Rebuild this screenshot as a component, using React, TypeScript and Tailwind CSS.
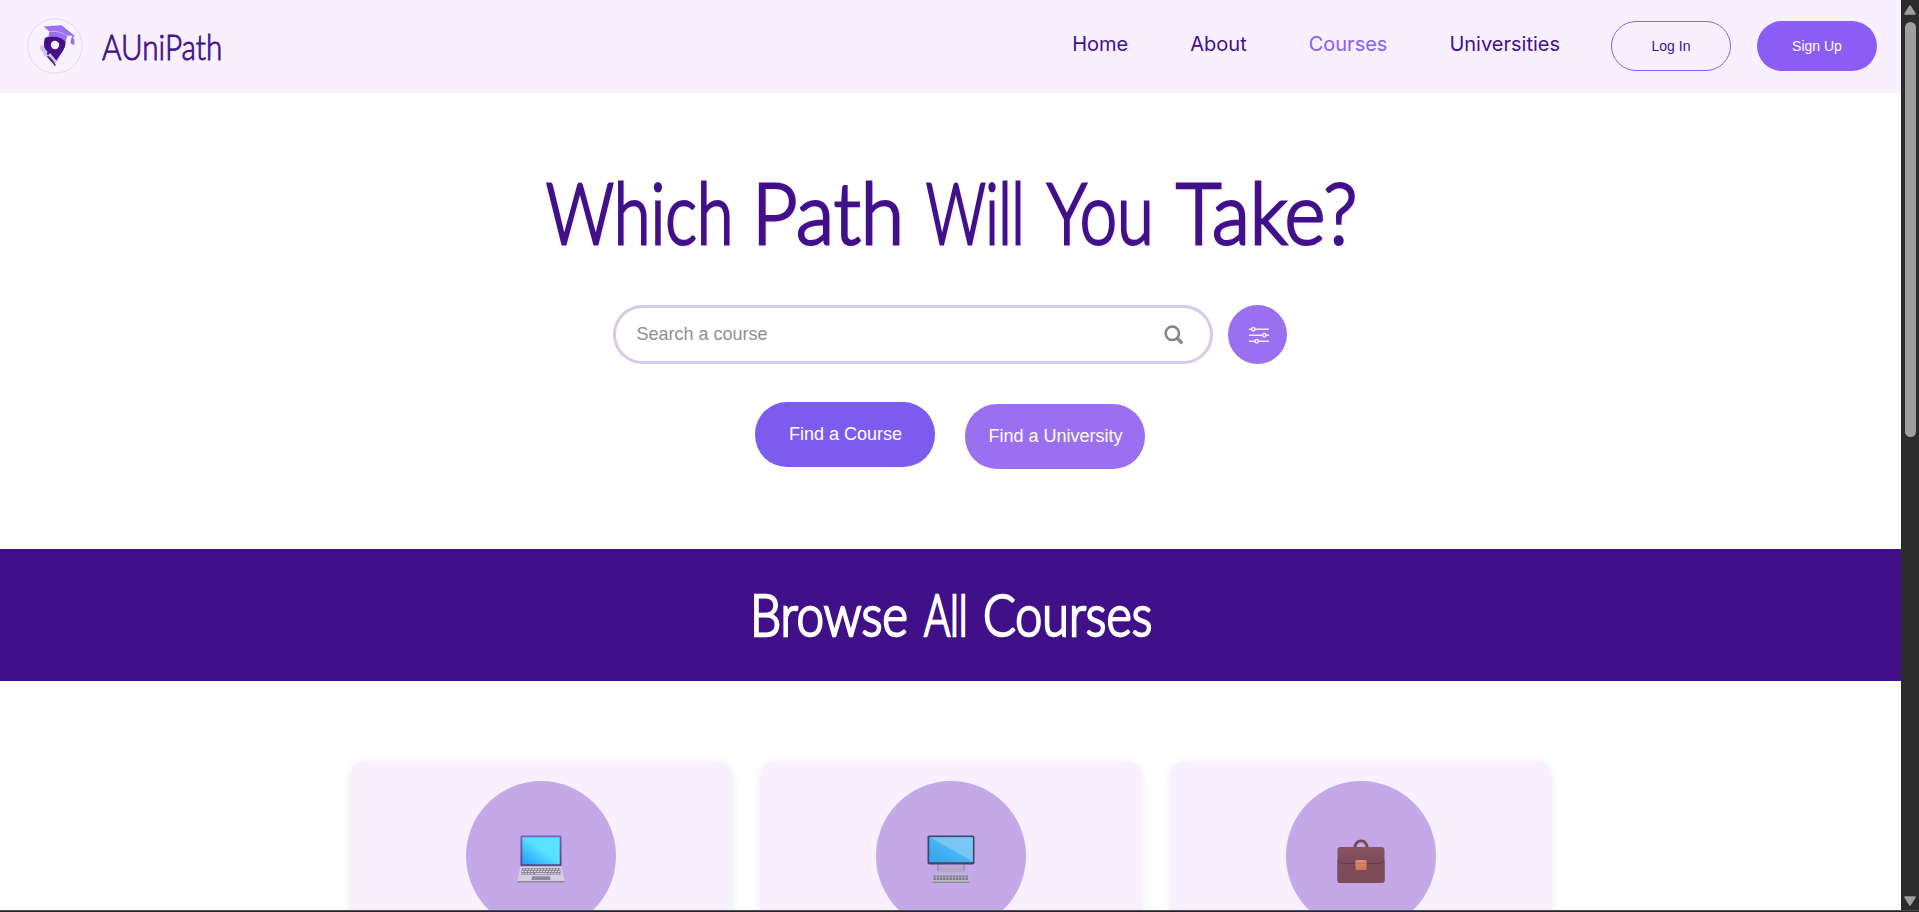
import type { ReactNode } from "react";

type Word = { text: string; className: string };

const handFont = "font-['Lato','Open_Sans',sans-serif] font-light";
const arial = "font-['Liberation_Sans',Arial,sans-serif]";

function Logo() {
  return (
    <svg viewBox="0 0 56 56" className="h-14 w-14 shrink-0">
      <circle cx="28" cy="28" r="27.2" fill="#f8f2ff" stroke="#e3d8f1" strokeWidth="1" />
      <path d="M14.500 27 L12.500 30.500 L24 44.500 L30.500 43.500 L33 38 Z" fill="#d5c5e8" />
      <path d="M18 20 C22 17 35 17.500 38.500 23 C39.500 32 31 38 28 45 C24 41 17.500 35 17 27 C17 24 17.200 22 18 20 Z" fill="#42108a" />
      <path d="M14 28 L19 34 L17.500 36 L21 39 L23 37 L29 44" fill="none" stroke="#d5c5e8" strokeWidth="2.600" />
      <path d="M20.500 38 L28.500 47.500" fill="none" stroke="#42108a" strokeWidth="1.300" />
      <circle cx="28" cy="27" r="4.200" fill="#f8f2ff" />
      <path d="M16.500 8.500 L34.500 7.300 L48 18 L40.500 17.500 L38.500 23.500 C34 19 28 18 21.500 18.500 L22.500 13.500 Z" fill="#9a70f0" />
      <path d="M22 13.600 C29 12.600 35 14.300 40 17.800" fill="none" stroke="#d9c8fb" strokeWidth="0.800" />
      <path d="M46.500 18 L45 21 L44.500 25 L46.500 25.800 L46.500 21" fill="none" stroke="#9a70f0" strokeWidth="1.800" />
    </svg>
  );
}

function SearchIcon() {
  return (
    <svg viewBox="0 0 20 20" className="h-5 w-5" fill="none" stroke="#848484">
      <circle cx="8.300" cy="8.300" r="6.700" strokeWidth="2.500" />
      <path d="M13 13 L18.300 18.300" strokeWidth="3.200" />
    </svg>
  );
}

function SlidersIcon() {
  return (
    <svg viewBox="0 0 22 20" className="h-5 w-[22px]" fill="#9b70f0" stroke="#f3ebff" strokeWidth="1.500">
      <path d="M1 4.200 H21 M1 10.200 H21 M1 16.300 H21" />
      <circle cx="5.300" cy="4.200" r="1.700" />
      <circle cx="16.300" cy="10.200" r="1.700" />
      <circle cx="8.700" cy="16.300" r="1.700" />
    </svg>
  );
}

function Laptop() {
  return (
    <svg viewBox="0 0 48 48" className="h-12 w-12">
      <defs>
        <linearGradient id="lap" x1="0" y1="1" x2="1" y2="0">
          <stop offset="0.100" stopColor="#2da8ff" />
          <stop offset="0.550" stopColor="#58e4ff" />
        </linearGradient>
        <linearGradient id="lapFrame" x1="0" y1="0" x2="0" y2="1">
          <stop offset="0" stopColor="#7463c0" />
          <stop offset="1" stopColor="#55427a" />
        </linearGradient>
      </defs>
      <rect x="3.500" y="0.500" width="41" height="31" rx="1.200" fill="url(#lapFrame)" />
      <rect x="5.300" y="2.300" width="37.400" height="27" fill="url(#lap)" />
      <path d="M3.500 31.200 H44.500 L47.500 45 V47.500 H0.500 V45 Z" fill="#d5cfe0" />
      <path d="M0.500 46.800 H47.500" stroke="#8b8299" strokeWidth="1.400" />
      <path d="M5 33 H43 L44 39.800 H4 Z" fill="#8f879d" />
      <path d="M6 34.300 H43 M5 36.500 H43.500 M5 38.700 H17 M31 38.700 H44" stroke="#ded9e6" strokeWidth="1" strokeDasharray="2 1" />
      <path d="M18 38.600 H30" stroke="#ded9e6" strokeWidth="1" />
      <path d="M15 41.300 H33 L33.500 45 H14.500 Z" fill="#928aa1" />
    </svg>
  );
}

function Desktop() {
  return (
    <svg viewBox="0 0 48 48" className="h-12 w-12">
      <defs>
        <linearGradient id="desk" x1="0" y1="1" x2="1" y2="0">
          <stop offset="0" stopColor="#32a3ee" />
          <stop offset="1" stopColor="#5bc8f8" />
        </linearGradient>
      </defs>
      <rect x="10" y="28" width="2" height="8" fill="#a49bb0" />
      <rect x="36" y="28" width="2" height="8" fill="#a49bb0" />
      <rect x="12" y="32" width="24" height="5" fill="#b5adbf" />
      <rect x="0.500" y="0.500" width="47" height="29" rx="1.800" fill="#4a4264" />
      <rect x="2.200" y="2.200" width="43.600" height="25" fill="url(#desk)" />
      <path d="M3 2.200 H45.800 V26.500 Z" fill="#8ccbf5" fillOpacity="0.700" />
      <rect x="5.500" y="39.500" width="37" height="8.500" fill="#bdb8c5" />
      <path d="M6.500 41.500 H41.500 M6.500 44 H41.500" stroke="#817a8c" strokeWidth="1.800" strokeDasharray="2.400 0.800" />
      <path d="M5.500 47.400 H42.500" stroke="#8e8799" strokeWidth="1.200" />
    </svg>
  );
}

function Briefcase() {
  return (
    <svg viewBox="0 0 48 48" className="h-12 w-12">
      <defs>
        <linearGradient id="flap" x1="0" y1="0" x2="0" y2="1">
          <stop offset="0" stopColor="#885361" />
          <stop offset="1" stopColor="#6b4256" />
        </linearGradient>
        <linearGradient id="clasp" x1="0" y1="0" x2="0" y2="1">
          <stop offset="0" stopColor="#d98d72" />
          <stop offset="1" stopColor="#cf7850" />
        </linearGradient>
      </defs>
      <path d="M18 13 C17.500 3.500 30.500 3.500 30 13" fill="none" stroke="#754855" strokeWidth="2.900" />
      <rect x="0.500" y="12" width="47" height="36" rx="3" fill="url(#flap)" />
      <path d="M0.500 25 L4 28.500 H44 L47.500 25 V45 Q47.500 48 44.500 48 H3.500 Q0.500 48 0.500 45 Z" fill="#7e4b5b" />
      <path d="M0.700 25 L4 28.500 H44 L47.300 25" fill="none" stroke="#653b50" strokeWidth="1" />
      <rect x="18.500" y="25" width="11" height="10" rx="1.300" fill="url(#clasp)" />
      <path d="M18.500 28.500 H29.500" stroke="#bd6d52" strokeWidth="0.800" />
    </svg>
  );
}

function Words({ words }: { words: Word[] }) {
  return (
    <>
      {words.map((w) => (
        <span key={w.text} className={"block shrink-0 origin-left whitespace-nowrap " + w.className}>
          {w.text}
        </span>
      ))}
    </>
  );
}

function Card({ children }: { children: ReactNode }) {
  return (
    <article className="flex h-[400px] w-[380px] justify-center rounded-[15px] bg-[#f8f0ff] pt-5 shadow-[0_2px_10px_rgba(0,0,0,0.1)]">
      <div className="flex h-[150px] w-[150px] items-center justify-center rounded-full bg-[#c4a8e8] pt-[5px]">
        {children}
      </div>
    </article>
  );
}

function Scrollbar() {
  return (
    <aside className="flex w-[18px] shrink-0 flex-col items-center justify-between bg-[#2b2b2b] pt-[5px] pb-[4px]">
      <div className="flex flex-col items-center gap-[7px]">
        <svg viewBox="0 0 12 10" className="h-[10px] w-3">
          <path d="M6 1 L11 9 H1 Z" fill="#9f9f9f" stroke="#9f9f9f" strokeWidth="1.500" strokeLinejoin="round" />
        </svg>
        <div className="h-[415px] w-[11px] rounded-full bg-[#9f9f9f]" />
      </div>
      <svg viewBox="0 0 12 10" className="h-[10px] w-3">
        <path d="M6 9 L11 1 H1 Z" fill="#9f9f9f" stroke="#9f9f9f" strokeWidth="1.500" strokeLinejoin="round" />
      </svg>
    </aside>
  );
}

export default function App() {
  return (
    <div className="flex h-[912px] w-[1919px] flex-col overflow-hidden bg-white">
      <div className="flex h-[910px]">
        <main className="flex w-[1901px] shrink-0 flex-col overflow-hidden">
          <header className="flex h-[93px] shrink-0 items-center justify-between bg-[#f8f0ff] pr-6 pb-px pl-[27px]">
            <div className="flex items-center gap-[19px]">
              <Logo />
              <div className={"flex w-[120px] text-[36px] leading-none text-[#42108a] [-webkit-text-stroke:0.9px_#42108a] " + handFont}>
                <Words words={[{ text: "AUniPath", className: "scale-x-[0.825]" }]} />
              </div>
            </div>
            <div className="flex items-center">
              <nav className="flex gap-[62px] pb-[4px] font-['Inter',sans-serif] text-[20px] leading-6 text-[#42108a]">
                <a>Home</a>
                <a>About</a>
                <a className="text-[#8b5cf6]">Courses</a>
                <a>Universities</a>
              </nav>
              <div className={"ml-[51px] flex gap-[26px] text-[14px] " + arial}>
                <button className="h-[50px] w-[120px] rounded-[25px] border border-[#8b5cf6] text-[#42108a]">Log In</button>
                <button className="h-[50px] w-[120px] rounded-[25px] bg-[#8b5cf6] text-white">Sign Up</button>
              </div>
            </div>
          </header>

          <section className="flex h-[456px] shrink-0 flex-col items-center pr-[2px]">
            <h1 className={"mt-[72px] flex h-[90px] w-[808px] text-[85px] leading-[92px] text-[#42108a] [-webkit-text-stroke:3px_#42108a] [text-shadow:2px_2px_4px_rgba(0,0,0,0.1)] " + handFont}>
              <Words
                words={[
                  { text: "Which", className: "w-[206px] scale-x-[0.785]" },
                  { text: "Path", className: "w-[174px] scale-x-[0.925]" },
                  { text: "Will", className: "w-[121px] scale-x-[0.69]" },
                  { text: "You", className: "w-[129px] scale-x-[0.785]" },
                  { text: "Take?", className: "w-[178px] scale-x-[0.92]" },
                ]}
              />
            </h1>
            <div className="mt-[50px] flex gap-[15px]">
              <div className={"flex h-[59px] w-[600px] items-center justify-between rounded-[30px] border-3 border-[#d9c8e8] pr-[26px] pl-[21px] text-[18px] text-[#8f8f8f] " + arial}>
                <span>Search a course</span>
                <SearchIcon />
              </div>
              <button className="flex h-[59px] w-[59px] items-center justify-center rounded-full bg-[#9b70f0] pl-[3px]">
                <SlidersIcon />
              </button>
            </div>
            <div className={"mt-[38px] flex items-start gap-[30px] text-[18px] text-white " + arial}>
              <button className="h-[65px] w-[180px] rounded-[32px] bg-[#7e5bef] pl-[2px]">Find a Course</button>
              <button className="mt-[2px] h-[65px] w-[180px] rounded-[32px] bg-[#9b70f0] pl-[2px]">Find a University</button>
            </div>
          </section>

          <section className="flex h-[132px] shrink-0 items-center justify-center bg-[#401089]">
            <h2 className={"flex h-[70px] w-[402px] text-[57px] leading-[69px] text-white [-webkit-text-stroke:2.5px_#ffffff] " + handFont}>
              <Words
                words={[
                  { text: "Browse", className: "w-[174px] scale-x-[0.865]" },
                  { text: "All", className: "w-[59px] scale-x-[0.7]" },
                  { text: "Courses", className: "w-[169px] scale-x-[0.85]" },
                ]}
              />
            </h2>
          </section>

          <section className="flex justify-center gap-[30px] pt-20">
            <Card><Laptop /></Card>
            <Card><Desktop /></Card>
            <Card><Briefcase /></Card>
          </section>
        </main>
        <Scrollbar />
      </div>
      <div className="h-[2px] border-t border-[#4a4f58] bg-[#1e2a2e]" />
    </div>
  );
}
